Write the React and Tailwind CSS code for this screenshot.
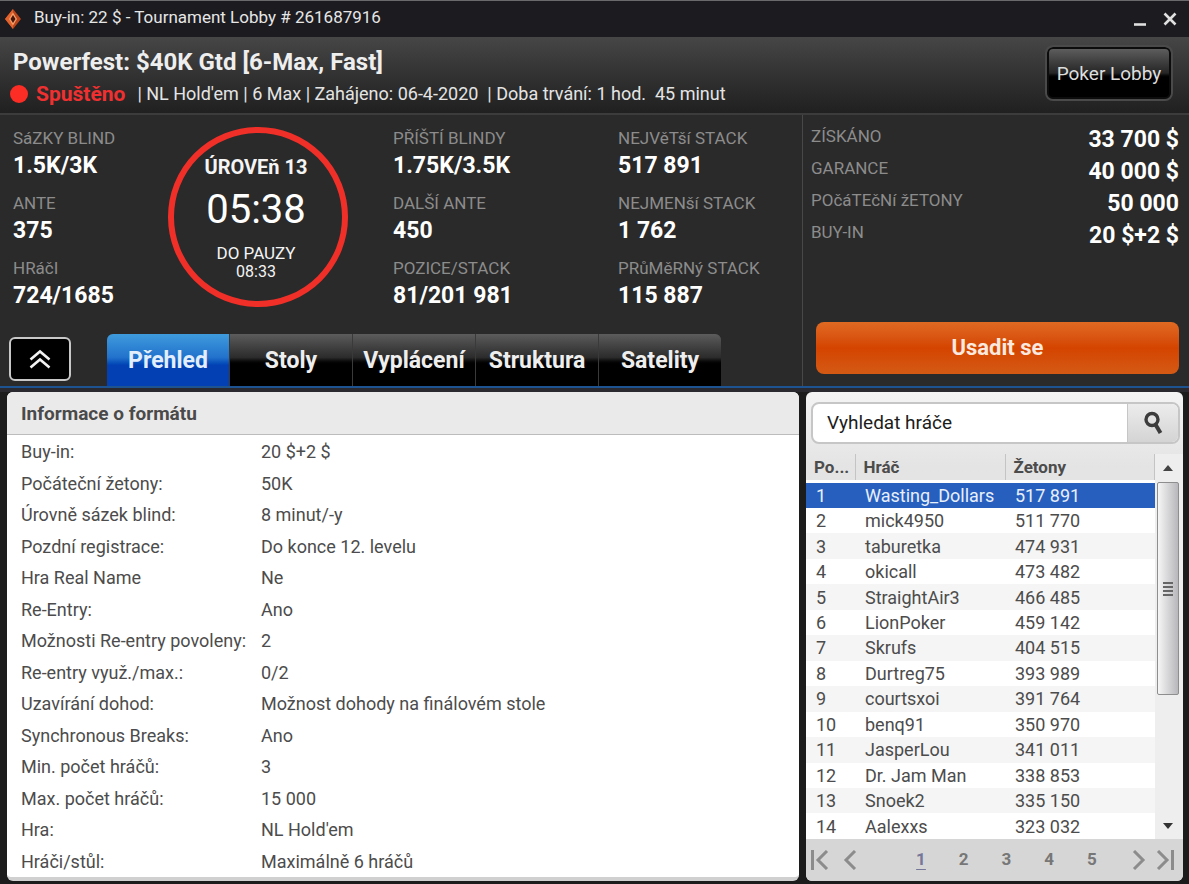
import { useState } from 'react';

const stats = [
    [
        { label: 'SáZKY BLIND', value: '1.5K/3K' },
        { label: 'ANTE', value: '375' },
        { label: 'HRáčI', value: '724/1685' },
    ],
    [
        { label: 'PŘÍŠTÍ BLINDY', value: '1.75K/3.5K' },
        { label: 'DALŠÍ ANTE', value: '450' },
        { label: 'POZICE/STACK', value: '81/201 981' },
    ],
    [
        { label: 'NEJVěTší STACK', value: '517 891' },
        { label: 'NEJMENší STACK', value: '1 762' },
        { label: 'PRůMěRNý STACK', value: '115 887' },
    ],
];

const prizes = [
    { label: 'ZÍSKÁNO', value: '33 700 $' },
    { label: 'GARANCE', value: '40 000 $' },
    { label: 'POčáTEčNí žETONY', value: '50 000' },
    { label: 'BUY-IN', value: '20 $+2 $' },
];

const tabs = ['Přehled', 'Stoly', 'Vyplácení', 'Struktura', 'Satelity'];

const formatInfo = [
    ['Buy-in:', '20 $+2 $'],
    ['Počáteční žetony:', '50K'],
    ['Úrovně sázek blind:', '8 minut/-y'],
    ['Pozdní registrace:', 'Do konce 12. levelu'],
    ['Hra Real Name', 'Ne'],
    ['Re-Entry:', 'Ano'],
    ['Možnosti Re-entry povoleny:', '2'],
    ['Re-entry využ./max.:', '0/2'],
    ['Uzavírání dohod:', 'Možnost dohody na finálovém stole'],
    ['Synchronous Breaks:', 'Ano'],
    ['Min. počet hráčů:', '3'],
    ['Max. počet hráčů:', '15 000'],
    ['Hra:', "NL Hold'em"],
    ['Hráči/stůl:', 'Maximálně 6 hráčů'],
];

const players = [
    ['Wasting_Dollars', '517 891'],
    ['mick4950', '511 770'],
    ['taburetka', '474 931'],
    ['okicall', '473 482'],
    ['StraightAir3', '466 485'],
    ['LionPoker', '459 142'],
    ['Skrufs', '404 515'],
    ['Durtreg75', '393 989'],
    ['courtsxoi', '391 764'],
    ['benq91', '350 970'],
    ['JasperLou', '341 011'],
    ['Dr. Jam Man', '338 853'],
    ['Snoek2', '335 150'],
    ['Aalexxs', '323 032'],
];

const TitleBar = () => (
    <div className="flex h-[37px] items-center border-t border-[#6a6a6c] bg-[#1b1b20] pl-[5px] pr-[11px]">
        <svg className="h-5 w-4" viewBox="0 0 16 20">
            <path d="M8 0 L16 10 L8 20 L0 10 Z" fill="#b8451c" />
            <path d="M8 0 L0 10 L8 20 L8 15.5 L4.5 10 L8 4.5 Z" fill="#e2622c" />
            <path d="M8 3.5 L12 10 L8 16.5 L4 10 Z" fill="#f5a06a" />
            <path d="M8 6 L10.5 10 L8 14 L5.5 10 Z" fill="#45160c" />
        </svg>
        <span className="ml-[13px] flex-1 pb-1 text-[17px] leading-5 text-[#e6e6e6]">
            Buy-in: 22 $ - Tournament Lobby # 261687916
        </span>
        <button aria-label="Minimize" className="mr-[14px] flex h-5 w-4 items-center justify-center">
            <svg className="h-4 w-4" viewBox="0 0 16 16">
                <path d="M2 13.5 H14" stroke="#e0e0e0" strokeWidth="2.6" />
            </svg>
        </button>
        <button aria-label="Close" className="flex h-5 w-4 items-center justify-center">
            <svg className="h-4 w-4" viewBox="0 0 16 16">
                <path d="M2.5 2.5 L13.5 13.5 M13.5 2.5 L2.5 13.5" stroke="#e0e0e0" strokeWidth="2.6" />
            </svg>
        </button>
    </div>
);

const Header = () => (
    <header className="flex h-[78px] items-start justify-between border-b-2 border-[#3c3c3c] bg-linear-to-b from-[#464646] to-[#202020] pl-[13px] pr-4">
        <div className="pt-[9px]">
            <h1 className="text-[24px] font-bold leading-8 text-[#eeeeee]">Powerfest: $40K Gtd [6-Max, Fast]</h1>
            <p className="flex items-center text-[18px] leading-8 text-[#e4e4e4]">
                <span className="-ml-[3px] mr-2 h-[18px] w-[18px] rounded-full bg-[#fb2d25]" />
                <strong className="mr-3 text-[21px] font-bold text-[#f03030]">Spuštěno</strong>
                <span className="whitespace-pre">{"| NL Hold'em | 6 Max | Zahájeno: 06-4-2020  | Doba trvání: 1 hod.  45 minut"}</span>
            </p>
        </div>
        <button className="mt-2 h-14 w-[128px] rounded-lg border-2 border-[#4a4a4a] bg-linear-to-b from-[#626262] via-[#262626] via-50% to-black to-60% pt-[2px] text-[19px] text-[#dddddd] shadow-[inset_0_0_0_2px_#0c0c0c]">
            Poker Lobby
        </button>
    </header>
);

const StatColumn = ({ items, className }) => (
    <dl className={`flex flex-col pt-3 ${className}`}>
        {items.map((item) => (
            <div key={item.label} className="h-[65px]">
                <dt className="text-[17px] leading-[22px] text-[#8c8c8c]">{item.label}</dt>
                <dd className="text-[23px] font-bold leading-[34px] text-white">{item.value}</dd>
            </div>
        ))}
    </dl>
);

const LevelClock = () => (
    <div className="mt-3 flex h-[180px] w-[180px] shrink-0 flex-col items-center rounded-full border-6 border-[#f03028] pr-1 pt-[22px] text-[#f4f4f4]">
        <span className="text-[20px] font-bold leading-6">ÚROVEň 13</span>
        <span className="mt-2 text-[40px] leading-[46px] text-white">05:38</span>
        <span className="mt-[10px] text-[17px] leading-5">DO PAUZY</span>
        <span className="text-[16px] leading-[18px]">08:33</span>
    </div>
);

const Tabs = ({ active, onSelect }) => (
    <nav className="mt-auto flex items-start pl-[9px]">
        <button
            aria-label="Collapse"
            className="mr-9 mt-[3px] flex h-11 w-[62px] items-center justify-center rounded-md border-2 border-[#c8c8c8] bg-black"
        >
            <svg className="h-5 w-[22px]" viewBox="0 0 22 20" fill="none" stroke="#f2f2f2" strokeWidth="2.6">
                <path d="M1.5 10.5 L11 2.5 L20.5 10.5 M1.5 18.5 L11 10.5 L20.5 18.5" />
            </svg>
        </button>
        <div className="flex h-[52px] gap-px overflow-hidden rounded-t-md bg-[#3a3a3a]" role="tablist">
            {tabs.map((tab) => (
                <button
                    key={tab}
                    role="tab"
                    aria-selected={tab === active}
                    onClick={() => onSelect(tab)}
                    className={`w-[122px] pt-[2px] text-[23px] font-bold ${
                        tab === active
                            ? 'bg-linear-to-b from-[#3f9bdc] via-[#2272cc] via-45% to-[#0240b4] to-60% text-[#e2eefb]'
                            : 'bg-linear-to-b from-[#5c5c5c] via-[#2c2c2c] via-45% to-black to-60% text-[#eeeeee]'
                    }`}
                >
                    {tab}
                </button>
            ))}
        </div>
    </nav>
);

const PrizePanel = () => (
    <aside className="flex w-[387px] shrink-0 flex-col border-l border-[#484848] pb-3 pl-2 pr-[10px] pt-[9px]">
        <dl className="flex h-[126px] flex-col">
            {prizes.map((prize) => (
                <div key={prize.label} className="flex flex-1 items-start justify-between">
                    <dt className="text-[17px] leading-6 text-[#8c8c8c]">{prize.label}</dt>
                    <dd className="text-[23px] font-bold leading-8 text-white">{prize.value}</dd>
                </div>
            ))}
        </dl>
        <button className="ml-[5px] mt-auto h-[52px] rounded-lg bg-linear-to-b from-[#e06a22] via-[#d44400] via-50% to-[#d45a14] pb-[2px] text-[22px] font-bold text-[#fbe9df]">
            Usadit se
        </button>
    </aside>
);

const FormatPanel = () => (
    <section className="min-w-0 flex-1 overflow-hidden rounded-md border-b-4 border-[#d0d0d0] bg-white">
        <h2 className="h-[43px] border-b border-[#bcbcbc] bg-[#eaeaea] pl-[14px] text-[19px] font-bold leading-[44px] text-[#4a4a4a]">
            Informace o formátu
        </h2>
        <table className="mt-px h-[441px] w-full text-[18px] text-[#4c4c4c]">
            <tbody>
                {formatInfo.map(([label, value]) => (
                    <tr key={label}>
                        <th scope="row" className="w-[254px] whitespace-nowrap p-0 pl-[14px] text-left font-normal">
                            {label}
                        </th>
                        <td className="p-0">{value}</td>
                    </tr>
                ))}
            </tbody>
        </table>
    </section>
);

const Scrollbar = () => (
    <div className="flex w-7 shrink-0 flex-col items-center bg-[#eeeeee] pr-[2px]">
        <button aria-label="Scroll up" className="flex h-[28px] w-full items-center justify-center">
            <svg className="h-2 w-3" viewBox="0 0 12 8">
                <path d="M6 1 L11 7 H1 Z" fill="#444" />
            </svg>
        </button>
        <div className="flex h-[213px] w-[22px] flex-col items-center justify-center gap-[2px] rounded-xs border border-[#8e8e8e] bg-linear-to-r from-[#f6f6f6] to-[#b8b8bc]">
            <span className="h-[2px] w-[10px] bg-[#666]" />
            <span className="h-[2px] w-[10px] bg-[#666]" />
            <span className="h-[2px] w-[10px] bg-[#666]" />
            <span className="h-[2px] w-[10px] bg-[#666]" />
        </div>
        <button aria-label="Scroll down" className="mt-auto flex h-[27px] w-full items-center justify-center">
            <svg className="h-2 w-3" viewBox="0 0 12 8">
                <path d="M1 1 H11 L6 7 Z" fill="#333" />
            </svg>
        </button>
    </div>
);

const Pager = () => (
    <div className="flex flex-1 items-center bg-[#d6d6d6] pl-1 pr-2 text-[17px] font-bold text-[#777777]">
        <button aria-label="First page" className="w-[22px]">
            <svg className="h-5 w-5" viewBox="0 0 20 20" fill="none" stroke="#8c8c8c" strokeWidth="3">
                <path d="M2.5 0 V20 M17 1 L8 10 L17 19" />
            </svg>
        </button>
        <button aria-label="Previous page" className="ml-2 w-5">
            <svg className="h-5 w-5" viewBox="0 0 20 20" fill="none" stroke="#8c8c8c" strokeWidth="3">
                <path d="M15 1 L6 10 L15 19" />
            </svg>
        </button>
        <div className="flex flex-1 justify-between pl-[51px] pr-[27px]">
            {['1', '2', '3', '4', '5'].map((page) => (
                <button
                    key={page}
                    className={`w-[20px] ${page === '1' ? 'text-[#77779a] underline underline-offset-4' : ''}`}
                >
                    {page}
                </button>
            ))}
        </div>
        <button aria-label="Next page" className="w-5">
            <svg className="h-5 w-5" viewBox="0 0 20 20" fill="none" stroke="#8c8c8c" strokeWidth="3">
                <path d="M5 1 L14 10 L5 19" />
            </svg>
        </button>
        <button aria-label="Last page" className="ml-[6px] w-5">
            <svg className="h-5 w-5" viewBox="0 0 20 20" fill="none" stroke="#8c8c8c" strokeWidth="3">
                <path d="M3 1 L12 10 L3 19 M17.5 0 V20" />
            </svg>
        </button>
    </div>
);

const PlayersPanel = () => {
    const [query, setQuery] = useState('Vyhledat hráče');

    return (
        <section className="flex w-[377px] shrink-0 flex-col overflow-hidden rounded-md bg-linear-to-b from-[#f4f4f4] to-[#e4e4e4] to-15%">
            <div className="ml-[5px] mr-[3px] mt-[10px] flex h-[42px] shrink-0 overflow-hidden rounded-lg border-2 border-[#c6c6c6] bg-white">
                <input
                    aria-label="Vyhledat hráče"
                    value={query}
                    onChange={(e) => setQuery(e.target.value)}
                    className="min-w-0 flex-1 pl-[14px] text-[19px] text-[#1c1c1c] outline-none"
                />
                <button
                    aria-label="Search"
                    className="flex w-[51px] items-center justify-center border-l border-[#c6c6c6] bg-linear-to-b from-[#ececec] to-[#d4d4d4]"
                >
                    <svg className="h-6 w-5" viewBox="0 0 20 24" fill="none" stroke="#3c3c3c">
                        <circle cx="9" cy="8.5" r="6" strokeWidth="3.4" />
                        <path d="M12.5 13.5 L17.5 22" strokeWidth="4" />
                    </svg>
                </button>
            </div>
            <div className="mt-[10px] flex shrink-0">
                <table className="h-[385px] flex-1 table-fixed border-collapse text-left text-[18px] text-[#4c4c4c]">
                    <colgroup>
                        <col className="w-[49px]" />
                        <col className="w-[150px]" />
                        <col />
                    </colgroup>
                    <thead>
                        <tr className="h-[27px] border-b-3 border-white text-[17px] leading-6">
                            <th className="p-0 pl-2 font-bold">Po...</th>
                            <th className="border-l border-[#c4c4c4] p-0 pl-2 font-bold">Hráč</th>
                            <th className="border-l border-r border-[#c4c4c4] p-0 pl-2 font-bold">Žetony</th>
                        </tr>
                    </thead>
                    <tbody className="leading-[25px]">
                        {players.map(([name, chips], i) => (
                            <tr
                                key={name}
                                className={i === 0 ? 'bg-[#275fbf] text-[#e8effa]' : i % 2 ? 'bg-white' : 'bg-[#f5f5f5]'}
                            >
                                <td className="p-0 pl-[10px]">{i + 1}</td>
                                <td className="p-0 pl-[10px]">{name}</td>
                                <td className="p-0 pl-[10px]">{chips}</td>
                            </tr>
                        ))}
                    </tbody>
                </table>
                <Scrollbar />
            </div>
            <Pager />
        </section>
    );
};

const App = () => {
    const [activeTab, setActiveTab] = useState('Přehled');

    return (
        <div className="min-h-screen bg-[#1c1c1c] font-['Roboto',sans-serif]">
            <TitleBar />
            <Header />
            <div className="flex h-[273px] border-b-2 border-[#1d5391] bg-[#2a2a2a]">
                <div className="flex flex-1 flex-col">
                    <div className="flex">
                        <StatColumn items={stats[0]} className="w-[168px] pl-[13px]" />
                        <LevelClock />
                        <StatColumn items={stats[1]} className="w-[270px] pl-[45px]" />
                        <StatColumn items={stats[2]} className="" />
                    </div>
                    <Tabs active={activeTab} onSelect={setActiveTab} />
                </div>
                <PrizePanel />
            </div>
            <main className="flex items-stretch gap-[7px] border-t-4 border-[#29292f] pb-1 pl-[7px] pr-[6px]">
                <FormatPanel />
                <PlayersPanel />
            </main>
        </div>
    );
};

export default App;
